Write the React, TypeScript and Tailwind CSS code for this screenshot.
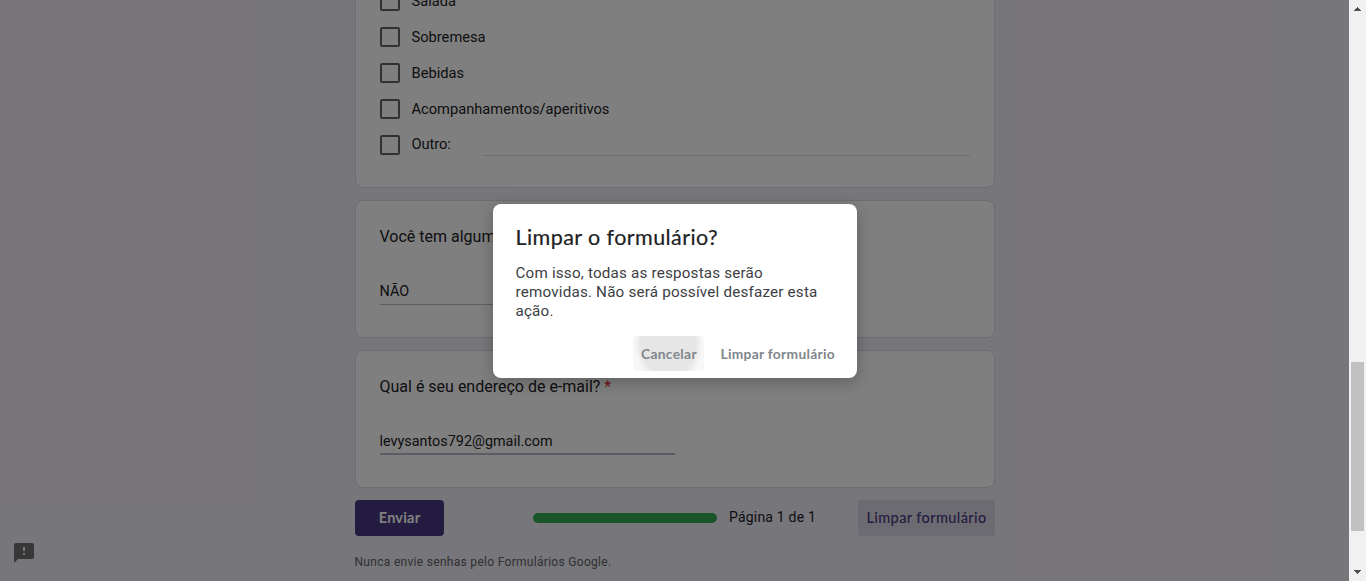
import type { ReactNode } from "react";

const options = ["Salada", "Sobremesa", "Bebidas", "Acompanhamentos/aperitivos"];

function Card({ children, className = "" }: { children: ReactNode; className?: string }) {
  return (
    <section className={`w-full shrink-0 rounded-lg border border-[#dadce0] bg-white px-[23.5px] ${className}`}>
      {children}
    </section>
  );
}

function Checkbox() {
  return <span className="size-5 shrink-0 rounded-[2px] border-2 border-[#5f6368]" />;
}

function Form() {
  return (
    <form className="-mt-[18px] flex w-[640px] flex-col gap-3">
      <Card className="h-[206px]">
        {options.map((option) => (
          <div key={option} className="flex h-9 items-center gap-3">
            <Checkbox />
            <span className="text-[14.67px] leading-5">{option}</span>
          </div>
        ))}
        <div className="flex h-9 items-center gap-3">
          <Checkbox />
          <span className="-mt-[2px] w-[59px] text-[14.67px] leading-5 tracking-[-0.1px]">Outro:</span>
          <span className="mt-5 h-px w-[487px] bg-[#dadce0]" />
        </div>
      </Card>
      <Card className="h-[138px] pt-6">
        <p className="text-[16px] leading-6">Você tem alguma alergia?</p>
        <div className="mt-[30px] h-[26px] w-[295px] border-b border-[#bdbdbd] text-[14.4px] leading-[26px]">NÃO</div>
      </Card>
      <Card className="h-[138px] pt-6">
        <p className="text-[16px] leading-6">
          Qual é seu endereço de e-mail? <span className="text-[#d93025]">*</span>
        </p>
        <div className="mt-[30px] h-[26px] w-[295px] border-b-2 border-[#bbb8c9] text-[14.4px] leading-[26px]">
          levysantos792@gmail.com
        </div>
      </Card>
      <div className="flex h-9 items-center">
        <span className="flex h-9 w-[89px] items-center justify-center rounded bg-[#483780] font-[Lato] text-[14.5px] font-bold tracking-[0.2px] text-white">
          Enviar
        </span>
        <span className="ml-[89px] h-[10px] w-[184px] rounded-full bg-[#34a853]" />
        <span className="ml-3 pb-0.5 text-[14px] tracking-[0.2px]">Página 1 de 1</span>
        <span className="ml-auto flex h-9 w-[137px] items-center justify-center rounded bg-[#dad6e4] font-[Lato] text-[14.5px] font-medium tracking-[0.4px] text-[#483780]">
          Limpar formulário
        </span>
      </div>
      <p className="-ml-[0.5px] text-[12px] leading-7 tracking-[0.3px] text-[#5f6368]">Nunca envie senhas pelo Formulários Google.</p>
    </form>
  );
}

function Dialog() {
  return (
    <div className="h-[174px] w-[364px] rounded-lg bg-white px-[23px] pt-[17px] text-[#202124] shadow-[0_4px_16px_rgba(0,0,0,0.25)]">
      <h1 className="-ml-[0.5px] font-[Lato] text-[21.5px] leading-8 tracking-[0.43px] [-webkit-text-stroke:0.2px_#202124]">
        Limpar o formulário?
      </h1>
      <p className="-ml-[0.5px] mt-[11px] w-[318px] text-[15.2px] leading-[19px] tracking-[0.2px] text-[#3c4043]">
        Com isso, todas as respostas serão removidas. Não será possível desfazer esta ação.
      </p>
      <div className="-mr-px mt-[15px] flex justify-end text-[#80868b]">
        <span className="flex h-[35px] w-[71px] items-center justify-center rounded bg-[radial-gradient(ellipse_34px_42px_at_50%_20%,#e6e6e6_80%,#f7f7f7_100%)] pt-px font-[Lato] text-[13.8px] font-bold tracking-[0.3px]">
          Cancelar
        </span>
        <span className="ml-4 flex h-[35px] items-center pt-px font-[Lato] text-[13.8px] font-bold tracking-[0.3px]">
          Limpar formulário
        </span>
      </div>
    </div>
  );
}

function Scrollbar() {
  return (
    <aside className="flex w-[17px] shrink-0 flex-col items-center bg-[#f1f1f1]">
      <svg width="17" height="17" shapeRendering="crispEdges">
        <path d="M5 11V10H6V9H7V8H8V7H9V8H10V9H11V10H12V11Z" fill="#505050" />
      </svg>
      <span className="mt-[345px] h-[169px] w-[13px] bg-[#c1c1c1]" />
      <svg className="mt-auto" width="17" height="17" shapeRendering="crispEdges">
        <path d="M5 6V7H6V8H7V9H8V10H9V9H10V8H11V7H12V6Z" fill="#505050" />
      </svg>
    </aside>
  );
}

export default function App() {
  return (
    <div className="flex h-[581px] w-[1366px] overflow-hidden font-[Roboto,sans-serif] text-[#202124]">
      <main className="relative flex h-full w-[1349px] justify-center overflow-hidden bg-[#efecf5] pl-px">
        <Form />
        <svg className="absolute bottom-[17px] left-[14px]" width="20" height="21" viewBox="0 0 20 21">
          <path d="M2 0H18Q20 0 20 2V14Q20 16 18 16H4L0 20V2Q0 0 2 0Z" fill="#6e6e6e" />
          <path d="M9 4H11V8H9ZM9 10H11V12H9Z" fill="#efecf5" />
        </svg>
        <div className="absolute inset-0 flex items-center justify-center bg-black/50 pl-px pt-px">
          <Dialog />
        </div>
      </main>
      <Scrollbar />
    </div>
  );
}
